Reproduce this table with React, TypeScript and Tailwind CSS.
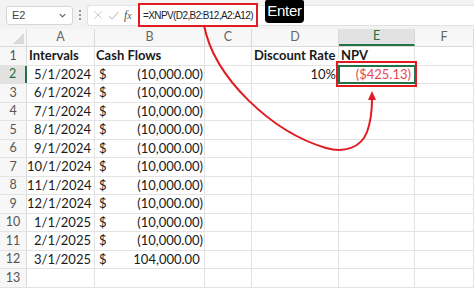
import React from 'react';

const cols = [
  { key: 'A', w: 'w-[68px]' },
  { key: 'B', w: 'w-[110px]' },
  { key: 'C', w: 'w-[47px]' },
  { key: 'D', w: 'w-[87px]' },
  { key: 'E', w: 'w-[76px]' },
  { key: 'F', w: 'w-[59px]' },
];

const flows = [
  ['5/1/2024', '(10,000.00)'],
  ['6/1/2024', '(10,000.00)'],
  ['7/1/2024', '(10,000.00)'],
  ['8/1/2024', '(10,000.00)'],
  ['9/1/2024', '(10,000.00)'],
  ['10/1/2024', '(10,000.00)'],
  ['11/1/2024', '(10,000.00)'],
  ['12/1/2024', '(10,000.00)'],
  ['1/1/2025', '(10,000.00)'],
  ['2/1/2025', '(10,000.00)'],
  ['3/1/2025', '104,000.00 '],
];

const cellFont = { fontFamily: 'Lato, "Open Sans", sans-serif' };

const App: React.FC = () => {
  const rows = Array(13).fill(0).map((_, i) => i + 1);

  const cellContent = (row: number, col: string) => {
    if (row === 1) {
      if (col === 'A') return <span className="font-bold pl-[2px]">Intervals</span>;
      if (col === 'B') return <span className="font-bold pl-[1px] whitespace-nowrap">Cash Flows</span>;
      if (col === 'D') return <span className="font-bold pl-[2px] whitespace-nowrap">Discount Rate</span>;
      if (col === 'E') return <span className="font-bold pl-[2px]">NPV</span>;
      return null;
    }
    const f = flows[row - 2];
    if (f && col === 'A') return <span className="block text-right pr-[3px]">{f[0]}</span>;
    if (f && col === 'B')
      return (
        <span className="flex justify-between pl-[4px] pr-[1px] whitespace-pre">
          <span>$</span>
          <span>{f[1]}</span>
        </span>
      );
    if (row === 2 && col === 'D') return <span className="block text-right pr-[2px]">10%</span>;
    if (row === 2 && col === 'E') return <span className="block text-right pr-[3px] text-[#e5484f]">($425.13)</span>;
    return null;
  };

  return (
    <div className="relative w-[474px] h-[288px] overflow-hidden bg-white select-none">
      {/* formula bar */}
      <div className="h-[29px] bg-[#f3f3f3] flex items-center pl-[6px] pt-[1px]">
        <div className="w-[67px] h-[19px] shrink-0 bg-white border border-[#d6d6d6] rounded-[3px] flex items-center justify-between px-[5px] text-[11px] text-[#444]" style={{ fontFamily: '"Liberation Sans", sans-serif' }}>
          <span>E2</span>
          <svg width="9" height="9" viewBox="0 0 10 10"><path d="M2 3.5 L5 6.5 L8 3.5" fill="none" stroke="#555" strokeWidth="1.2" /></svg>
        </div>
        <div className="w-[14px] shrink-0 flex flex-col items-center gap-[2px]">
          <span className="w-[2px] h-[2px] bg-[#777] rounded-full" />
          <span className="w-[2px] h-[2px] bg-[#777] rounded-full" />
          <span className="w-[2px] h-[2px] bg-[#777] rounded-full" />
        </div>
        <div className="flex-1 h-[21px] bg-white border-y border-l border-[#e2e2e2] rounded-l-[3px] flex items-center">
          <div className="flex items-center gap-[5px] pl-[5px] w-[50px] shrink-0">
            <svg width="10" height="10" viewBox="0 0 12 12"><path d="M1.5 1.5 L10.5 10.5 M10.5 1.5 L1.5 10.5" stroke="#c4c4c4" strokeWidth="1.1" /></svg>
            <svg width="11" height="11" viewBox="0 0 12 12"><path d="M1 6.5 L4.3 9.8 L11 2.5" fill="none" stroke="#c4c4c4" strokeWidth="1.1" /></svg>
            <span className="italic text-[12px] text-[#555] leading-none" style={{ fontFamily: '"Liberation Serif", serif' }}>
              f<span className="text-[10px]">x</span>
            </span>
          </div>
          <div className="w-[120px] h-[24px] shrink-0 border-2 border-[#e11b22] bg-white flex items-center pl-[3px] text-[10px] tracking-[-0.6px] text-[#222] whitespace-nowrap" style={{ fontFamily: '"Liberation Sans", sans-serif' }}>
            =XNPV(D2,B2:B12,A2:A12)
          </div>
        </div>
      </div>

      {/* grid */}
      <div className="grid grid-rows-[18px_repeat(13,18.5px)] text-[13px] text-[#1a1a1a] leading-none" style={cellFont}>
        <div className="flex bg-[#f7f7f7] border-b border-[#dadada]">
          <div className="w-[27px] shrink-0 relative border-r border-[#dadada]">
            <svg className="absolute right-[2px] bottom-[2px]" width="11" height="11" viewBox="0 0 11 11"><path d="M11 0 L11 11 L0 11 Z" fill="#d9d9d9" /></svg>
          </div>
          {cols.map((c) => (
            <div
              key={c.key}
              className={`${c.w} shrink-0 flex items-center justify-center text-[12.5px] border-r border-[#dadada] ${c.key === 'E' ? 'bg-[#e2e2e2] text-[#1f6f43] border-b-2 border-b-[#217346]' : 'text-[#666]'}`}
            >
              {c.key}
            </div>
          ))}
        </div>
        {rows.map((r) => (
          <div key={r} className="flex border-b border-[#e3e3e3]">
            <div
              className={`w-[27px] shrink-0 flex items-center justify-center text-[12.5px] border-r ${r === 2 ? 'bg-[#e2e2e2] text-[#1f6f43] border-r-2 border-r-[#217346]' : 'bg-[#f7f7f7] text-[#555] border-[#dadada]'}`}
            >
              {r}
            </div>
            {cols.map((c) => (
              <div
                key={c.key}
                className={`${c.w} shrink-0 flex items-center border-r border-[#e3e3e3] ${r === 2 && c.key === 'E' ? 'outline-2 outline-[#217346] -outline-offset-1' : ''}`}
              >
                <div className="w-full">{cellContent(r, c.key)}</div>
              </div>
            ))}
          </div>
        ))}
      </div>

      {/* red highlight round E2 */}
      <div className="absolute left-[336px] top-[61px] w-[81px] h-[26px] border-2 border-[#e11b22]" />

      {/* Enter badge */}
      <div
        className="absolute left-[265px] top-0 w-[39px] h-[23px] bg-black rounded-b-[4px] rounded-t-[2px] flex items-center justify-center text-white text-[15px] tracking-[-0.3px]"
        style={{ fontFamily: '"Liberation Sans", sans-serif' }}
      >
        Enter
      </div>

      {/* arrow */}
      <svg className="absolute left-0 top-0 pointer-events-none" width="474" height="288" viewBox="0 0 474 288">
        <path d="M204 25 C 214 78, 272 132, 326 148 C 344 153, 361 148, 367 132 C 371 121, 372 108, 372 99" fill="none" stroke="#e11b22" strokeWidth="2" />
        <path d="M368 100 L372 91 L376 100 Z" fill="#e11b22" />
      </svg>
    </div>
  );
};

export default App;
